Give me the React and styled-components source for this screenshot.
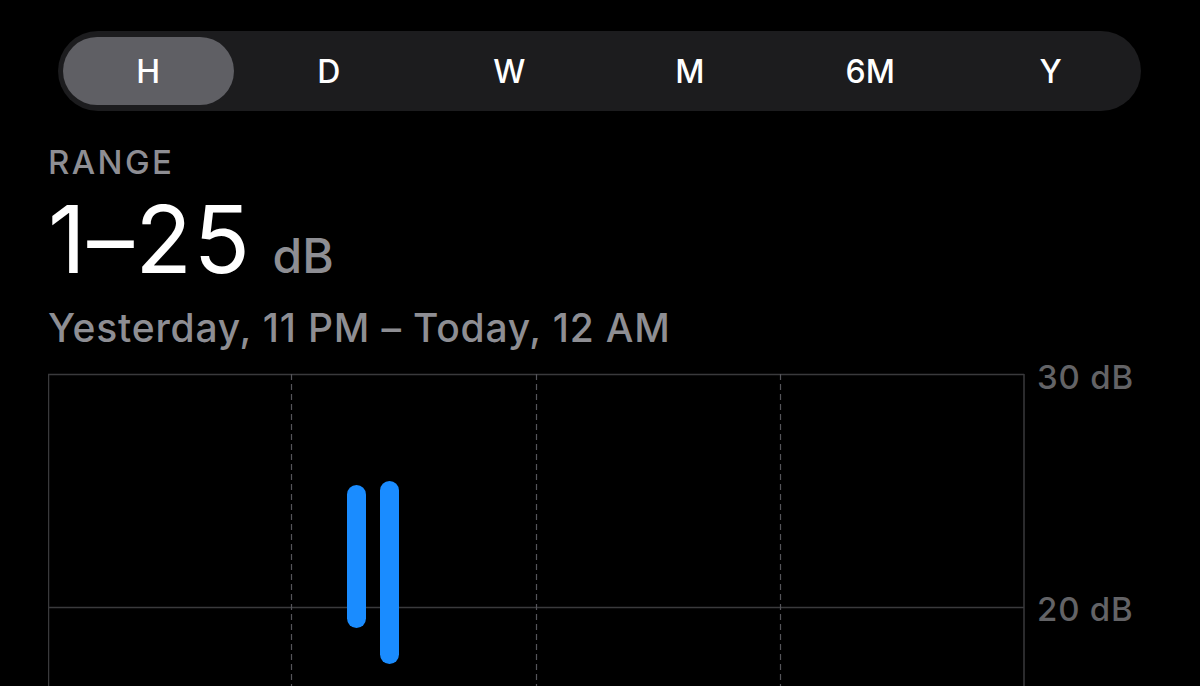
import React from 'react'
import { createGlobalStyle, styled } from 'styled-components'

const GlobalStyle = createGlobalStyle`
  html, body {
    margin: 0;
    background: #000;
  }
  body {
    font-family: Inter, "Liberation Sans", sans-serif;
    color: #fff;
    -webkit-font-smoothing: antialiased;
  }
`

const Page = styled.div`
  width: 1200px;
  height: 686px;
  overflow: hidden;
  background: #000;
  padding-top: 31px;
  box-sizing: border-box;
`

const Segmented = styled.div`
  margin-left: 58px;
  width: 1083px;
  height: 80px;
  border-radius: 40px;
  background: #1c1c1e;
  display: grid;
  grid-template-columns: repeat(6, 1fr);
`

const Segment = styled.div`
  margin: 6px 5px;
  border-radius: 34px;
  display: flex;
  align-items: center;
  justify-content: center;
  font-size: 32px;
  font-weight: 500;
  background: ${({ $active }) => ($active ? '#5f5f64' : 'transparent')};
`

const Summary = styled.div`
  padding-left: 48px;
  display: flex;
  flex-direction: column;
`

const Label = styled.div`
  margin-top: 31px;
  font-size: 33px;
  line-height: 40px;
  font-weight: 500;
  color: #8e8e93;
  letter-spacing: 2.4px;
`

const Value = styled.div`
  display: flex;
  align-items: baseline;
  gap: 21px;
  margin-top: 12px;
  line-height: 90px;
`

const Big = styled.span`
  font-size: 93px;
  font-weight: 400;
  letter-spacing: 1.5px;
`

const Unit = styled.span`
  font-size: 48px;
  font-weight: 500;
  color: #8e8e93;
`

const Period = styled.div`
  margin-top: 4px;
  font-size: 39px;
  line-height: 46px;
  font-weight: 500;
  color: #8e8e93;
  letter-spacing: 0.8px;
`

const ChartWrap = styled.div`
  padding-left: 48px;
`

const segments = ['H', 'D', 'W', 'M', '6M', 'Y']

// values in page pixels relative to the chart's top grid line
const bars = [
  { x: 308.5, top: 111, bottom: 254 },
  { x: 341.5, top: 107, bottom: 290 },
]

const OFF = 23

const Chart = () => {
  const w = 976
  const dashed = [243.5, 488.5, 732.5]
  const font = "Inter, 'Liberation Sans', sans-serif"
  return (
    <svg width="1152" height="340" style={{ display: 'block' }}>
      <g transform={`translate(0 ${OFF})`}>
        <line x1="0" y1="0.5" x2={w} y2="0.5" stroke="#3a3a3c" strokeWidth="1.5" />
        <line x1="0" y1="233.5" x2={w} y2="233.5" stroke="#3a3a3c" strokeWidth="1.5" />
        <line x1="0.5" y1="0" x2="0.5" y2="330" stroke="#3a3a3c" strokeWidth="1.5" />
        <line x1={w} y1="0" x2={w} y2="330" stroke="#3a3a3c" strokeWidth="1.5" />
        {dashed.map((x) => (
          <line key={x} x1={x} y1="0" x2={x} y2="330" stroke="#55555a" strokeWidth="1.2" strokeDasharray="6 4" />
        ))}
        {bars.map((b, i) => (
          <rect key={i} x={b.x - 9.5} y={b.top} width="19" height={b.bottom - b.top} rx="9.5" fill="#1a8cff" />
        ))}
        <text x="989" y="15" fill="#636366" fontSize="33" fontWeight="500" letterSpacing="0.8" fontFamily={font}>30 dB</text>
        <text x="989" y="247" fill="#636366" fontSize="33" fontWeight="500" letterSpacing="0.8" fontFamily={font}>20 dB</text>
      </g>
    </svg>
  )
}

const App = () => {
  return (
    <Page>
      <GlobalStyle />
      <Segmented>
        {segments.map((s, i) => (
          <Segment key={s} $active={i === 0}>{s}</Segment>
        ))}
      </Segmented>
      <Summary>
        <Label>RANGE</Label>
        <Value>
          <Big>1–25</Big>
          <Unit>dB</Unit>
        </Value>
        <Period>Yesterday, 11 PM – Today, 12 AM</Period>
      </Summary>
      <ChartWrap>
        <Chart />
      </ChartWrap>
    </Page>
  )
}

export default App
